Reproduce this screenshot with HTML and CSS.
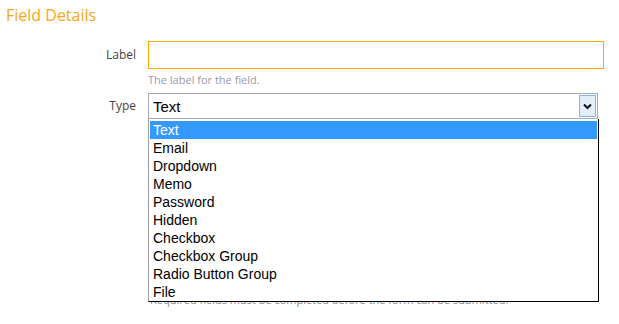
FILE: index.html
```
<!DOCTYPE html>
<html>
<head>
<meta charset="utf-8">
<link rel="stylesheet" href="styles.css">
</head>
<body>
<h2 class="title">Field Details</h2>
<div class="form">
  <div class="row">
    <label class="lbl">Label</label>
    <div class="field">
      <div class="input"></div>
      <div class="help">The label for the field.</div>
    </div>
  </div>
  <div class="row row-type">
    <label class="lbl">Type</label>
    <div class="field">
      <div class="select">
        <span class="sel-text">Text</span>
        <span class="btn"><svg width="9" height="7" viewBox="0 0 9 7"><path d="M1 1.5 L4.5 5 L8 1.5" fill="none" stroke="#111" stroke-width="2"/></svg></span>
      </div>
      <ul class="list">
        <li class="on">Text</li>
        <li>Email</li>
        <li>Dropdown</li>
        <li>Memo</li>
        <li>Password</li>
        <li>Hidden</li>
        <li>Checkbox</li>
        <li>Checkbox Group</li>
        <li>Radio Button Group</li>
        <li>File</li>
      </ul>
    </div>
  </div>
  <div class="note">Required fields must be completed before the form can be submitted.</div>
</div>
</body>
</html>
```
FILE: styles.css
```
html, body {
  margin: 0;
  padding: 0;
  background: #fff;
}
body {
  min-height: 324px;
}
.title {
  margin: 0;
  padding: 4px 0 0 6px;
  font-family: "Open Sans", sans-serif;
  font-weight: normal;
  font-size: 16px;
  line-height: 22px;
  color: #f5a81c;
}
.form {
  margin-top: 15px;
}
.row {
  display: flex;
  align-items: flex-start;
}
.lbl {
  flex: 0 0 148px;
  width: 148px;
  padding-right: 12px;
  box-sizing: border-box;
  text-align: right;
  font-family: "Open Sans", sans-serif;
  font-size: 12px;
  color: #444;
  line-height: 28px;
}
.row-type {
  margin-top: 5px;
}
.row-type .lbl {
  line-height: 26px;
}
.field {
  position: relative;
  z-index: 2;
}
.input {
  width: 456px;
  height: 28px;
  box-sizing: border-box;
  border: 1px solid #f7ad00;
}
.help {
  margin-top: 3px;
  font-family: "Open Sans", sans-serif;
  font-size: 11px;
  line-height: 16px;
  color: #9c98ae;
}
.select {
  width: 450px;
  height: 26px;
  box-sizing: border-box;
  border: 1px solid #a9a9ad;
  display: flex;
  align-items: center;
  justify-content: space-between;
  padding: 0 1px 0 4px;
}
.sel-text {
  font-family: "Liberation Sans", sans-serif;
  font-size: 15px;
  color: #000;
}
.btn {
  width: 17px;
  height: 22px;
  box-sizing: border-box;
  border: 1px solid #82b5ea;
  background: #e2eefa;
  display: flex;
  align-items: center;
  justify-content: center;
}
.list {
  position: absolute;
  left: 0;
  top: 26px;
  width: 451px;
  margin: 0;
  padding: 2px 1px 0 1px;
  box-sizing: border-box;
  list-style: none;
  background: #fff;
  border-left: 1px solid #a0a0a0;
  border-right: 1px solid #000;
  border-bottom: 1px solid #000;
  font-family: "Liberation Sans", sans-serif;
  font-size: 14px;
  color: #000;
}
.list li {
  height: 18px;
  line-height: 18px;
  padding-left: 3px;
}
.list li.on {
  background: #3399ff;
  color: #fff;
}
.note {
  margin: 174px 0 0 150px;
  font-family: "Open Sans", sans-serif;
  font-size: 11px;
  line-height: 14px;
  color: #8a8a8a;
}
```
